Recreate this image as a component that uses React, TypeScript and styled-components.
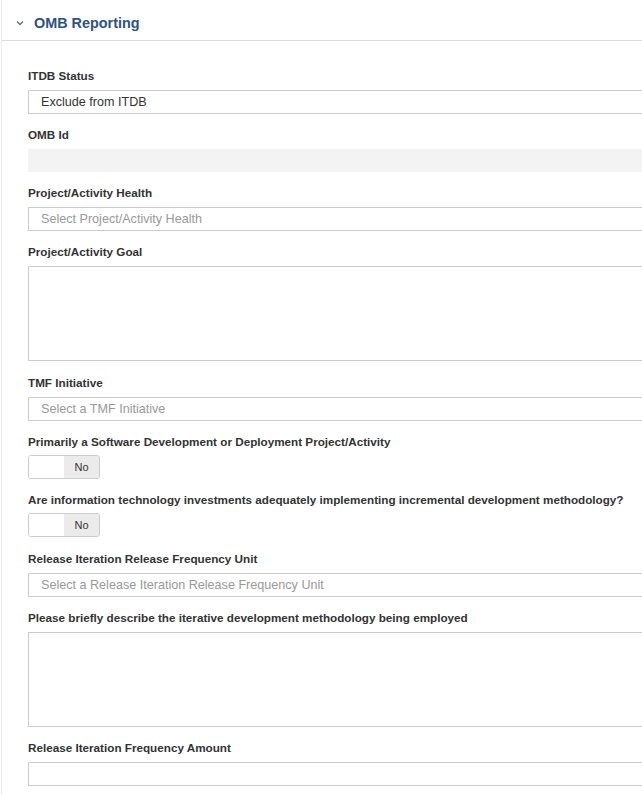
import React from "react";
import styled, { createGlobalStyle } from "styled-components";

const GlobalStyle = createGlobalStyle`
  html, body {
    margin: 0;
    padding: 0;
    background: #fff;
    overflow: hidden;
  }
  body {
    font-family: "Liberation Sans", Arial, sans-serif;
    color: #333;
  }
`;

type FieldKind = "text" | "select" | "disabled" | "textarea" | "toggle";

interface FieldDef {
  label: string;
  kind: FieldKind;
  value?: string;
  placeholder?: string;
}

const fields: FieldDef[] = [
  { label: "ITDB Status", kind: "select", value: "Exclude from ITDB" },
  { label: "OMB Id", kind: "disabled" },
  {
    label: "Project/Activity Health",
    kind: "select",
    placeholder: "Select Project/Activity Health",
  },
  { label: "Project/Activity Goal", kind: "textarea" },
  { label: "TMF Initiative", kind: "select", placeholder: "Select a TMF Initiative" },
  {
    label: "Primarily a Software Development or Deployment Project/Activity",
    kind: "toggle",
  },
  {
    label:
      "Are information technology investments adequately implementing incremental development methodology?",
    kind: "toggle",
  },
  {
    label: "Release Iteration Release Frequency Unit",
    kind: "select",
    placeholder: "Select a Release Iteration Release Frequency Unit",
  },
  {
    label: "Please briefly describe the iterative development methodology being employed",
    kind: "textarea",
  },
  { label: "Release Iteration Frequency Amount", kind: "text" },
];

const Chevron = () => (
  <svg width="8" height="6" viewBox="0 0 8 6">
    <polyline
      points="1,1.5 4,4.5 7,1.5"
      fill="none"
      stroke="#4d6d97"
      strokeWidth="1.3"
    />
  </svg>
);

const Toggle = () => (
  <ToggleBox>
    <ToggleHandle />
    <ToggleLabel>No</ToggleLabel>
  </ToggleBox>
);

const Control = ({ field }: { field: FieldDef }) => {
  switch (field.kind) {
    case "disabled":
      return <DisabledBox />;
    case "textarea":
      return <TextArea />;
    case "toggle":
      return <Toggle />;
    default:
      return (
        <InputBox>
          {field.value ? (
            <Value>{field.value}</Value>
          ) : (
            <Placeholder>{field.placeholder}</Placeholder>
          )}
        </InputBox>
      );
  }
};

const App = () => {
  return (
    <>
      <GlobalStyle />
      <Panel>
        <Header>
          <Chevron />
          <Title>OMB Reporting</Title>
        </Header>
        <Form>
          {fields.map((f) => (
            <Field key={f.label} $kind={f.kind}>
              <Label>{f.label}</Label>
              <Control field={f} />
            </Field>
          ))}
        </Form>
      </Panel>
    </>
  );
};

const Panel = styled.div`
  margin-left: 1px;
  width: 700px;
  min-height: 795px;
  border-left: 1px solid #ececec;
`;

const Header = styled.div`
  display: flex;
  align-items: center;
  gap: 10px;
  height: 41px;
  padding-left: 14px;
  padding-top: 6px;
  box-sizing: border-box;
  border-bottom: 1px solid #dcdcdc;
`;

const Title = styled.h2`
  margin: 0;
  font-size: 14.4px;
  font-weight: bold;
  color: #2d5283;
`;

const Form = styled.div`
  display: flex;
  flex-direction: column;
  padding: 27px 0 0 26px;
`;

const Field = styled.div<{ $kind: FieldKind }>`
  display: flex;
  flex-direction: column;
  gap: ${(p) => (p.$kind === "toggle" ? "5px" : "6px")};
  margin-bottom: ${(p) =>
    p.$kind === "textarea" ? "13.5px" : p.$kind === "toggle" ? "13.5px" : "13px"};
`;

const Label = styled.div`
  font-size: 11.7px;
  line-height: 16px;
  font-weight: bold;
  color: #333;
`;

const InputBox = styled.div`
  height: 24px;
  box-sizing: border-box;
  border: 1px solid #cccccc;
  display: flex;
  align-items: center;
  padding-left: 12px;
  font-size: 12.6px;
`;

const Value = styled.span`
  color: #333;
`;

const Placeholder = styled.span`
  color: #999;
`;

const DisabledBox = styled.div`
  height: 23px;
  background: #f3f3f3;
`;

const TextArea = styled.div`
  height: 95px;
  box-sizing: border-box;
  border: 1px solid #cccccc;
`;

const ToggleBox = styled.div`
  width: 72px;
  height: 24px;
  box-sizing: border-box;
  border: 1px solid #cccccc;
  border-radius: 3px;
  display: flex;
  overflow: hidden;
`;

const ToggleHandle = styled.div`
  flex: 0 0 35px;
  background: #fff;
`;

const ToggleLabel = styled.div`
  flex: 1;
  background: #ebebeb;
  display: flex;
  align-items: center;
  justify-content: center;
  font-size: 11px;
  color: #333;
`;

export default App;
